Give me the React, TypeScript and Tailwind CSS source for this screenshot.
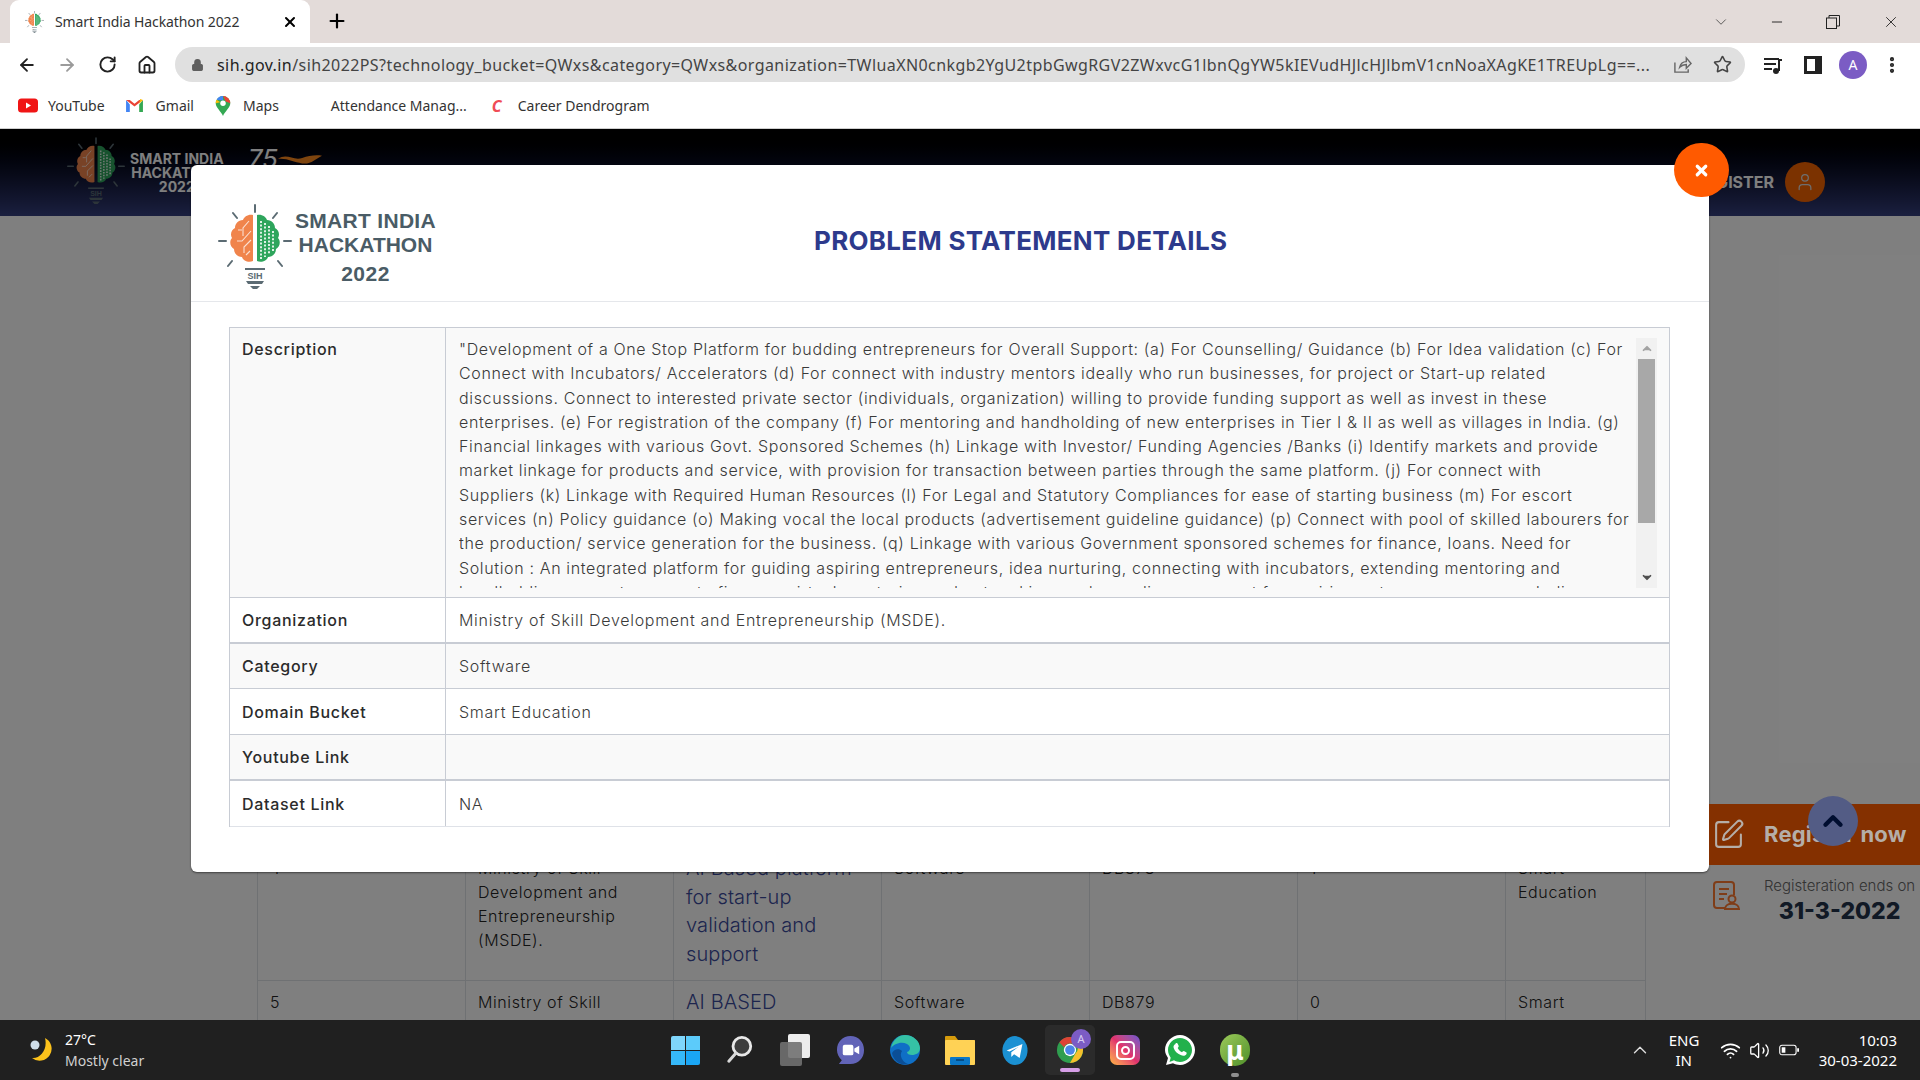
import { ArrowLeft, ArrowRight, RotateCw, Home, Lock, Star, ChevronDown, ChevronUp, Minus, X, Plus, EllipsisVertical, User, SquarePen, Wifi, Volume2 } from "lucide-react"

const ui = "font-['Noto_Sans',sans-serif]"
const page = "font-['Inter',sans-serif]"

const descriptionLines = [
  "\"Development of a One Stop Platform for budding entrepreneurs for Overall Support: (a) For Counselling/ Guidance (b) For Idea validation (c) For",
  "Connect with Incubators/ Accelerators (d) For connect with industry mentors ideally who run businesses, for project or Start-up related",
  "discussions. Connect to interested private sector (individuals, organization) willing to provide funding support as well as invest in these",
  "enterprises. (e) For registration of the company (f) For mentoring and handholding of new enterprises in Tier I & II as well as villages in India. (g)",
  "Financial linkages with various Govt. Sponsored Schemes (h) Linkage with Investor/ Funding Agencies /Banks (i) Identify markets and provide",
  "market linkage for products and service, with provision for transaction between parties through the same platform. (j) For connect with",
  "Suppliers (k) Linkage with Required Human Resources (l) For Legal and Statutory Compliances for ease of starting business (m) For escort",
  "services (n) Policy guidance (o) Making vocal the local products (advertisement guideline guidance) (p) Connect with pool of skilled labourers for",
  "the production/ service generation for the business. (q) Linkage with various Government sponsored schemes for finance, loans. Need for",
  "Solution : An integrated platform for guiding aspiring entrepreneurs, idea nurturing, connecting with incubators, extending mentoring and",
  "handholding support, access to finance, virtual mentoring and networking, and compliance support for aspiring entrepreneurs across India",
]

const rows = [
  { label: "Organization", value: "Ministry of Skill Development and Entrepreneurship (MSDE).", cls: "h-[46px] bg-white border-b-2" },
  { label: "Category", value: "Software", cls: "h-[45px] bg-[#f9f9f9] border-b" },
  { label: "Domain Bucket", value: "Smart Education", cls: "h-[46px] bg-white border-b" },
  { label: "Youtube Link", value: "", cls: "h-[46px] bg-[#f9f9f9] border-b-2" },
  { label: "Dataset Link", value: "NA", cls: "h-[45px] bg-white" },
]

function Brain({ className }: { className: string }) {
  return (
    <svg viewBox="0 0 74 86" className={className}>
      <g stroke="#5b6b73" strokeWidth="2" strokeLinecap="round">
        <path d="M37 1v7M15 9l4 5M59 9l-4 5M1 37h7M66 37h7M10 62l4-5M64 62l-4-5" />
      </g>
      <path d="M35 11c-5-1-9 2-10 5-5 0-8 4-8 8-4 2-5 7-3 10-3 3-2 9 2 11 0 5 4 8 8 8 1 4 7 6 11 4z" fill="#f0844c" />
      <path d="M39 11c5-1 9 2 10 5 5 0 8 4 8 8 4 2 5 7 3 10 3 3 2 9-2 11 0 5-4 8-8 8-1 4-7 6-11 4z" fill="#2ea55c" />
      <g stroke="#fff" strokeWidth="1.1" fill="none" opacity=".75">
        <path d="M31 17l-6 7v8M33 27l-9 10h-5M33 36l-7 7v6M24 26h-4M32 47l-4 4" />
      </g>
      <g stroke="#fff" strokeWidth="2" strokeDasharray="2 1.6" opacity=".85">
        <path d="M43 17v38M47 19v34M51 22v28M55 27v20" />
      </g>
      <path d="M27 64h20v2H27z" fill="#5b6b73" />
      <text x="37" y="75" textAnchor="middle" fontSize="9" fontWeight="700" fill="#5b6b73" fontFamily="Liberation Sans, sans-serif">SIH</text>
      <path d="M28 77h18l-2 3H30zM32 82h10l-3 3h-4z" fill="#5b6b73" />
    </svg>
  )
}

function Chrome() {
  return (
    <svg viewBox="0 0 30 30" className="w-[28px] h-[28px]">
      <circle cx="15" cy="15" r="14" fill="#2f9e4f" />
      <path d="M15 1a14 14 0 0 1 12.1 7H15a7 7 0 0 0-6.4 4L3.6 6.6A14 14 0 0 1 15 1z" fill="#dd4335" />
      <path d="M27.1 8A14 14 0 0 1 15 29l6-10.5a7 7 0 0 0 0-10.5z" fill="#f6c02c" />
      <circle cx="15" cy="15" r="6.6" fill="#fff" />
      <circle cx="15" cy="15" r="5.2" fill="#4a87ea" />
    </svg>
  )
}

function TaskIcon({ name }: { name: string }) {
  if (name === "start")
    return (
      <div className="grid grid-cols-2 gap-[1px] w-[29px] h-[29px]">
        <div className="bg-[#7fd6fb] rounded-tl-[2px]" />
        <div className="bg-[#5ccbfa]" />
        <div className="bg-[#36b8f8]" />
        <div className="bg-[#1aa6f5] rounded-br-[2px]" />
      </div>
    )
  if (name === "search")
    return (
      <svg viewBox="0 0 30 32" className="w-[28px] h-[30px]">
        <circle cx="17" cy="12" r="9.5" fill="#3d3d3d" stroke="#e8e8e8" strokeWidth="3" />
        <path d="M10.5 19.5L3 28" stroke="#d8d8d8" strokeWidth="3.2" strokeLinecap="round" />
      </svg>
    )
  if (name === "widgets")
    return (
      <div className="relative w-[30px] h-[32px]">
        <div className="absolute right-0 top-0 w-[22px] h-[24px] rounded-[2px] bg-[#ededed]" />
        <div className="absolute left-0 bottom-0 w-[22px] h-[24px] rounded-[2px] bg-[#707070]/90" />
      </div>
    )
  if (name === "chat")
    return (
      <svg viewBox="0 0 30 34" className="w-[29px] h-[33px]">
        <path d="M15 2c8 0 14 6 14 14.500S23 31 15 31H3l3-4C3 24 1 20.500 1 16.500 1 8 7 2 15 2z" fill="#6264b8" />
        <rect x="7" y="11" width="11" height="11" rx="2" fill="#fff" />
        <path d="M19 15l5-3v9l-5-3z" fill="#fff" />
      </svg>
    )
  if (name === "edge")
    return (
      <svg viewBox="0 0 30 32" className="w-[30px] h-[32px]">
        <circle cx="15" cy="16" r="15" fill="#0f6fc6" />
        <path d="M1 14C3 5 9 1 15 1c8 0 15 6 15 13 0 5-4 7-8 7-3 0-5-1-5-3 4-1 4-6 0-8-6-3-13 0-16 4z" fill="#35c1a5" />
        <path d="M12 17c-3 4 0 11 6 13-8 2-15-4-16-11 2-4 7-5 10-2z" fill="#0b4e96" />
      </svg>
    )
  if (name === "files")
    return (
      <svg viewBox="0 0 30 32" className="w-[30px] h-[32px]">
        <path d="M0 3a1 1 0 0 1 1-1h9l3 4h16a1 1 0 0 1 1 1v4H0z" fill="#d69b0c" />
        <rect x="0" y="6" width="30" height="25" rx="1" fill="#ffd255" />
        <rect x="5" y="23" width="20" height="8" rx="1" fill="#0b78c8" />
        <path d="M11 26h8" stroke="#063f70" strokeWidth="1.5" />
      </svg>
    )
  if (name === "telegram")
    return (
      <svg viewBox="0 0 28 32" className="w-[26px] h-[31px]">
        <ellipse cx="14" cy="16" rx="13.500" ry="15.500" fill="#1b91d3" />
        <path d="M5 16l17-7-3 15-6-4-3 3v-5l8-6-10 5z" fill="#fff" />
      </svg>
    )
  if (name === "chrome")
    return (
      <div className="relative w-[50px] h-[50px] rounded-[5px] bg-[#2b2b2b] flex items-center justify-center">
        <Chrome />
        <div className="absolute right-[4px] top-[4px] w-[20px] h-[20px] rounded-full bg-[#7b5cc4] flex items-center justify-center text-[11px] text-[#d8cdf2]">A</div>
        <div className="absolute bottom-[3px] left-[15px] w-[20px] h-[4px] rounded-full bg-[#d59ee6]" />
      </div>
    )
  if (name === "instagram")
    return (
      <div className="w-[30px] h-[30px] rounded-[7px] bg-gradient-to-tr from-[#fdb33c] via-[#e1306c] to-[#6a4fd0] flex items-center justify-center">
        <div className="relative w-[19px] h-[19px] rounded-[5px] border-2 border-white flex items-center justify-center">
          <div className="w-[9px] h-[9px] rounded-full border-2 border-white" />
        </div>
      </div>
    )
  if (name === "whatsapp")
    return (
      <svg viewBox="0 0 30 32" className="w-[30px] h-[32px]">
        <path d="M15 1c8 0 15 7 15 15s-7 15-15 15c-2.500 0-5-.6-7-1.700L1 31l2-7C1.500 21.500 0 19 0 16 0 8 7 1 15 1z" fill="#fff" />
        <path d="M15 4c6.500 0 12 5.500 12 12s-5.500 12-12 12c-2.200 0-4.300-.6-6-1.700L4.500 28l1.200-4.300C4.300 21.800 3 19 3 16 3 9.500 8.500 4 15 4z" fill="#22b14c" />
        <path d="M10.500 9.500c1-.8 1.800-.5 2.200.3l1 2.300c.2.500-.6 1.400-1 1.900.8 1.800 2.400 3.400 4.300 4.200.5-.4 1.400-1.400 1.900-1.100l2.200 1.200c.7.400.8 1.100.1 2.100-1 1.300-3 1.700-5.500.7-3.500-1.300-6-4-7-7-.5-1.800 0-3.400 1.800-4.100z" fill="#fff" />
      </svg>
    )
  return (
    <div className="relative">
      <div className="w-[30px] h-[32px] rounded-full bg-gradient-to-br from-[#9ccb5a] to-[#4f8f2a] flex items-center justify-center text-white text-[26px] font-bold leading-none">μ</div>
      <div className="absolute -bottom-[11px] left-[11px] w-[8px] h-[4px] rounded-full bg-[#8f8f8f]" />
    </div>
  )
}

function BrowserChrome() {
  return (
    <div className={`${ui} text-[#3c3c3c]`}>
      <div className="h-[43px] bg-[#e3dbd9] flex items-end pl-[10px]">
        <div className="w-[300px] h-[43px] bg-white rounded-t-[9px] flex items-center pl-[15px] pr-[12px]">
          <Brain className="w-[19px] h-[22px] shrink-0" />
          <span className="ml-[11px] text-[14px] tracking-[-0.1px] text-[#333]">Smart India Hackathon 2022</span>
          <X className="ml-auto w-[16px] h-[16px] text-black" strokeWidth={3} />
        </div>
        <Plus className="ml-[16px] mb-[11px] w-[22px] h-[22px] text-black" strokeWidth={2.4} />
        <div className="ml-auto flex items-center h-[43px] pr-[20px]">
          <ChevronDown className="w-[18px] h-[18px] text-[#333] mr-[39px]" strokeWidth={1} />
          <Minus className="w-[16px] h-[16px] text-black mr-[41px]" strokeWidth={1.2} />
          <svg viewBox="0 0 14 14" className="w-[14px] h-[14px] mr-[42px]" fill="none" stroke="#222" strokeWidth="1">
            <rect x="0.5" y="3" width="10" height="10.500" />
            <path d="M3 3V0.500h10.500V11H10.500" />
          </svg>
          <X className="w-[18px] h-[18px] text-black" strokeWidth={1} />
        </div>
      </div>
      <div className="h-[43px] bg-white flex items-center pl-[17px] pr-[12px]">
        <ArrowLeft className="w-[20px] h-[20px] text-[#222]" strokeWidth={2.2} />
        <ArrowRight className="ml-[20px] w-[20px] h-[20px] text-[#9b9b9b]" strokeWidth={2.2} />
        <RotateCw className="ml-[21px] w-[19px] h-[19px] text-[#222]" strokeWidth={2.4} />
        <Home className="ml-[20px] w-[20px] h-[20px] text-[#222]" strokeWidth={2.2} />
        <div className="ml-[18px] w-[1570px] h-[35px] rounded-full bg-[#e0e0e0] flex items-center pl-[16px] pr-[13px]">
          <Lock className="w-[13px] h-[14px] text-[#5f5f5f] fill-[#5f5f5f]" />
          <span className="ml-[13px] w-[1438px] overflow-hidden whitespace-nowrap text-[16px] tracking-[0.42px] text-[#444] pt-[1px]">
            <span className="text-[#222]">sih.gov.in</span>/sih2022PS?technology_bucket=QWxs&category=QWxs&organization=TWluaXN0cnkgb2YgU2tpbGwgRGV2ZWxvcG1lbnQgYW5kIEVudHJlcHJlbmV1cnNoaXAgKE1TREUpLg==...
          </span>
          <svg viewBox="0 0 20 20" className="ml-[18px] w-[19px] h-[19px] shrink-0" fill="none" stroke="#666" strokeWidth="1.500">
            <path d="M2 8v10h14v-3M7 13c1-4 4-6 7-6V3l5 6-5 5v-4c-3 0-5 1-7 3z" />
          </svg>
          <Star className="ml-[21px] w-[19px] h-[19px] text-[#444] shrink-0" strokeWidth={2} />
        </div>
        <svg viewBox="0 0 20 20" className="ml-[18px] w-[20px] h-[20px] shrink-0" fill="#222">
          <path d="M1 3h15v2H1zM1 8h12v2H1zM1 13h8v2H1z" />
          <circle cx="13" cy="16" r="3" />
          <path d="M15 4h4v2h-2v10h-2z" />
        </svg>
        <div className="ml-[21px] w-[18px] h-[18px] shrink-0 bg-[#222] p-[3px] pr-[7px]">
          <div className="w-full h-full bg-white" />
        </div>
        <div className="ml-[17px] w-[28px] h-[28px] shrink-0 rounded-full bg-[#7b5cc4] flex items-center justify-center text-white text-[14px]">A</div>
        <EllipsisVertical className="ml-[15px] w-[20px] h-[20px] text-[#222] shrink-0" strokeWidth={3} />
      </div>
      <div className="h-[43px] pb-[3px] bg-white border-b border-[#cfcfcf] flex items-center text-[14px] text-[#333]">
        <svg viewBox="0 0 20 14" className="ml-[18px] w-[20px] h-[15px]">
          <rect width="20" height="14" rx="3.500" fill="#f01515" />
          <path d="M8 4l5 3-5 3z" fill="#fff" />
        </svg>
        <span className="ml-[10px]">YouTube</span>
        <svg viewBox="0 0 20 16" className="ml-[20px] w-[19px] h-[15px]">
          <path d="M1 2v13h4V7z" fill="#4285f4" />
          <path d="M15 7v8h4V2z" fill="#34a853" />
          <path d="M1 2l9 7 9-7-4 0-5 4-5-4z" fill="#ea4335" />
          <path d="M16 1l3 1-4 4z" fill="#fbbc04" />
        </svg>
        <span className="ml-[12px]">Gmail</span>
        <svg viewBox="0 0 16 22" className="ml-[21px] w-[16px] h-[20px]">
          <path d="M8 0a8 8 0 0 1 8 8c0 5-6 9-8 14-2-5-8-9-8-14a8 8 0 0 1 8-8z" fill="#34a853" />
          <path d="M1 4a8 8 0 0 1 7-4v5z" fill="#4285f4" />
          <path d="M8 0a8 8 0 0 1 8 8l-5-2z" fill="#ea4335" />
          <path d="M0 8c0-1 .3-3 1-4l4 3z" fill="#fbbc04" />
          <circle cx="8" cy="8" r="3" fill="#fff" />
        </svg>
        <span className="ml-[12px]">Maps</span>
        <span className="ml-[52px]">Attendance Manag...</span>
        <span className="ml-[25px] w-[10px] text-[#f04b55] text-[16px] font-bold italic">C</span>
        <span className="ml-[16px]">Career Dendrogram</span>
      </div>
    </div>
  )
}

function BackgroundPage() {
  return (
    <div className="h-full flex flex-col">
      <header className="h-[87px] shrink-0 bg-gradient-to-b from-black to-[#353f80] flex items-center pl-[67px] pr-[95px]">
        <Brain className="w-[58px] h-[68px] -mt-[3px]" />
        <div className={`${page} ml-[5px] text-white font-bold text-[14px] leading-[14px] text-center`}>
          <div>SMART INDIA</div>
          <div>HACKATHON</div>
          <div>2022</div>
        </div>
        <div className="ml-[24px] mb-[28px] flex items-center">
          <span className={`${page} text-[26px] text-white italic`}>75</span>
          <svg viewBox="0 0 40 12" className="w-[44px] h-[14px]"><path d="M0 6c8-6 14 2 22-1 6-2 12-3 18-2-6 3-10 8-18 7C14 9 8 5 0 6z" fill="#ff8a1f" /></svg>
        </div>
        <span className={`${page} ml-auto mt-[18px] text-[16px] font-bold text-white`}>REGISTER</span>
        <div className="ml-[11px] mt-[18px] w-[40px] h-[40px] rounded-full bg-[#f76400] flex items-center justify-center">
          <User className="w-[20px] h-[20px] text-[#ddd]" strokeWidth={1.500} />
        </div>
      </header>
      <div className={`${page} flex-1 bg-white flex overflow-hidden`}>
        <div className="w-[1709px] shrink-0 pl-[257px] pt-[626px] text-[16px] leading-[24px] font-light text-[#222] tracking-[0.6px]">
          <div className="w-[1389px] border-l border-r border-[#dee2e6]">
            <div className="grid grid-cols-[207px_208px_208px_208px_208px_208px_1fr] border-b border-[#dee2e6]">
              <div className="px-[12px] pt-[14px]">4</div>
              <div className="px-[12px] pt-[14px] border-l border-[#dee2e6]">Ministry of Skill Development and Entrepreneurship (MSDE).</div>
              <div className="p-[12px] border-l border-[#dee2e6] text-[20px] leading-[28.600px] text-[#3a4a9c] tracking-[0.1px]">AI Based platform for start-up validation and support</div>
              <div className="px-[12px] pt-[14px] border-l border-[#dee2e6]">Software</div>
              <div className="px-[12px] pt-[14px] border-l border-[#dee2e6]">DB878</div>
              <div className="px-[12px] pt-[14px] border-l border-[#dee2e6]">1</div>
              <div className="px-[12px] pt-[14px] border-l border-[#dee2e6]">Smart Education</div>
            </div>
            <div className="grid grid-cols-[207px_208px_208px_208px_208px_208px_1fr]">
              <div className="px-[12px] pt-[9px]">5</div>
              <div className="px-[12px] pt-[9px] border-l border-[#dee2e6]">Ministry of Skill Development</div>
              <div className="px-[12px] pt-[9px] border-l border-[#dee2e6] text-[20px] text-[#3a4a9c] tracking-[0.1px]">AI BASED</div>
              <div className="px-[12px] pt-[9px] border-l border-[#dee2e6]">Software</div>
              <div className="px-[12px] pt-[9px] border-l border-[#dee2e6]">DB879</div>
              <div className="px-[12px] pt-[9px] border-l border-[#dee2e6]">0</div>
              <div className="px-[12px] pt-[9px] border-l border-[#dee2e6]">Smart Education</div>
            </div>
          </div>
        </div>
        <aside className="flex-1 pt-[588px]">
          <div className="relative z-10 h-[61px] bg-[#843000] flex items-center pl-[3px]">
            <SquarePen className="w-[33px] h-[33px] text-[#b5aea8]" strokeWidth={1.500} />
            <span className="ml-[19px] text-[22px] font-bold text-[#b5aea8] tracking-[0.2px]">Register now</span>
          </div>
          <div className="flex items-start mt-[10px] pl-[3px]">
            <svg viewBox="0 0 28 30" className="w-[28px] h-[30px] mt-[6px]" fill="none" stroke="#ff7a30" strokeWidth="2">
              <path d="M14 27H5a3 3 0 0 1-3-3V4a3 3 0 0 1 3-3h14a3 3 0 0 1 3 3v10" />
              <path d="M7 8h10M7 13h8M7 18h5" />
              <circle cx="20" cy="18" r="3.500" />
              <path d="M13 28c0-7 14-7 14 0z" />
            </svg>
            <div className="ml-[28px] text-center">
              <div className="text-[15px] leading-[22px] font-light text-[#666] whitespace-nowrap -ml-[4px]">Registeration ends on</div>
              <div className="text-[23px] leading-[30px] font-extrabold text-[#22324a] -ml-[4px] -mt-[1px]">31-3-2022</div>
            </div>
          </div>
        </aside>
      </div>
    </div>
  )
}

function Modal() {
  return (
    <div className={`${page} absolute left-[191px] top-[36px] w-[1518px] h-[707px] bg-white rounded-[6px] shadow-[0_1px_2px_rgba(0,0,0,0.5)]`}>
      <div className="h-[137px] pt-[14px] border-b border-[#e5e7eb] flex items-center pl-[27px]">
        <div className="flex items-center text-[#4a5c66] font-['Liberation_Sans',sans-serif] font-bold mt-[14px]">
          <Brain className="w-[74px] h-[86px]" />
          <div className="ml-[3px] w-[141px] text-center leading-none">
            <div className="text-[21px] tracking-[0.3px] whitespace-nowrap">SMART INDIA</div>
            <div className="text-[21px] mt-[3px] whitespace-nowrap">HACKATHON</div>
            <div className="text-[21px] tracking-[0.500px] mt-[8px]">2022</div>
          </div>
        </div>
        <h2 className="ml-[378px] text-[26px] font-bold text-[#2d3a8c] whitespace-nowrap tracking-[0.3px]">PROBLEM STATEMENT DETAILS</h2>
      </div>
      <div className="mt-[25px] mx-[38px] w-[1441px] border border-b-0 border-[#c8ccd4] text-[16px] tracking-[0.7px]">
        <div className="h-[270px] flex bg-[#f9f9f9] border-b border-[#c8ccd4]">
          <div className="w-[216px] shrink-0 pl-[12px] pt-[9px] leading-[24px] font-medium text-[#2b2b2b] border-r border-[#c8ccd4]">Description</div>
          <div className="flex-1 flex pl-[13px] pt-[9px] pr-[12px] pb-[9px] min-w-0">
            <div className="flex-1 min-w-0 overflow-hidden text-[16px] leading-[24.300px] font-light text-[#3a3a3a] whitespace-nowrap tracking-[0.64px]">
              {descriptionLines.map((line) => (
                <div key={line}>{line}</div>
              ))}
            </div>
            <div className="w-[21px] shrink-0 mt-[1px] bg-[#f1f1f1] flex flex-col items-center">
              <ChevronUp className="w-[14px] h-[21px] text-[#a3a3a3] fill-[#a3a3a3]" strokeWidth={3} />
              <div className="w-[17px] h-[164px] bg-[#a8a8a8]" />
              <ChevronDown className="mt-auto w-[14px] h-[21px] text-[#505050] fill-[#505050]" strokeWidth={3} />
            </div>
          </div>
        </div>
        {rows.map((r) => (
          <div key={r.label} className={`flex border-[#c8ccd4] ${r.cls}`}>
            <div className="w-[216px] shrink-0 pl-[12px] flex items-center font-medium text-[#2b2b2b] border-r border-[#c8ccd4]">{r.label}</div>
            <div className="flex-1 pl-[13px] flex items-center font-light text-[#3a3a3a]">{r.value}</div>
          </div>
        ))}
        <div className="border-b border-[#dfe2e8]" />
      </div>
      <button className="absolute -top-[22px] -right-[20px] w-[55px] h-[54px] rounded-full bg-[#ff5a00] flex items-center justify-center">
        <X className="w-[17px] h-[17px] text-white" strokeWidth={4.500} />
      </button>
    </div>
  )
}

function Taskbar() {
  const icons = ["start", "search", "widgets", "chat", "edge", "files", "telegram", "chrome", "instagram", "whatsapp", "torrent"]
  return (
    <div className={`${ui} h-[60px] bg-[#202020] text-white grid grid-cols-[1fr_auto_1fr] items-center`}>
      <div className="flex items-center pl-[28px]">
        <svg viewBox="0 0 26 26" className="w-[26px] h-[26px]">
          <path d="M17 1a12 12 0 1 1-13 20c8 1 16-8 13-20z" fill="#fcc21b" />
          <circle cx="7" cy="8" r="4.500" fill="#cfdde8" />
        </svg>
        <div className="ml-[11px] text-[14px] leading-[21px]">
          <div>27°C</div>
          <div className="text-[#d0d0d0]">Mostly clear</div>
        </div>
      </div>
      <div className="flex items-center">
        {icons.map((name) => (
          <div key={name} className="w-[55px] h-[50px] flex items-center justify-center">
            <TaskIcon name={name} />
          </div>
        ))}
      </div>
      <div className="flex items-center justify-end pr-[23px] text-[15px]">
        <ChevronUp className="w-[22px] h-[22px] text-[#ddd]" strokeWidth={1.500} />
        <div className="ml-[18px] w-[30px] text-center leading-[20px] -mt-[1px]">
          <div>ENG</div>
          <div>IN</div>
        </div>
        <Wifi className="ml-[21px] w-[21px] h-[21px]" strokeWidth={2} />
        <Volume2 className="ml-[8px] w-[21px] h-[21px]" strokeWidth={1.500} />
        <svg viewBox="0 0 22 12" className="ml-[9px] w-[20px] h-[12px]" fill="none" stroke="#fff" strokeWidth="1.200">
          <rect x="0.800" y="0.800" width="18" height="10.400" rx="2.500" />
          <rect x="3" y="3" width="4" height="6" fill="#fff" stroke="none" />
          <path d="M21 4v4" strokeWidth="2" />
        </svg>
        <div className="ml-[20px] text-right leading-[20px] -mt-[1px]">
          <div>10:03</div>
          <div>30-03-2022</div>
        </div>
      </div>
    </div>
  )
}

export default function App() {
  return (
    <div className="w-[1920px] h-[1080px] flex flex-col overflow-hidden bg-white">
      <BrowserChrome />
      <main className="relative flex-1 min-h-0 overflow-hidden">
        <BackgroundPage />
        <div className="absolute inset-0 bg-black/50" />
        <div className="absolute left-[1808px] top-[667px] z-20 w-[50px] h-[50px] rounded-full bg-[#535c85] flex items-center justify-center">
          <ChevronUp className="w-[30px] h-[30px] text-[#000e30]" strokeWidth={3.500} />
        </div>
        <Modal />
      </main>
      <Taskbar />
    </div>
  )
}
